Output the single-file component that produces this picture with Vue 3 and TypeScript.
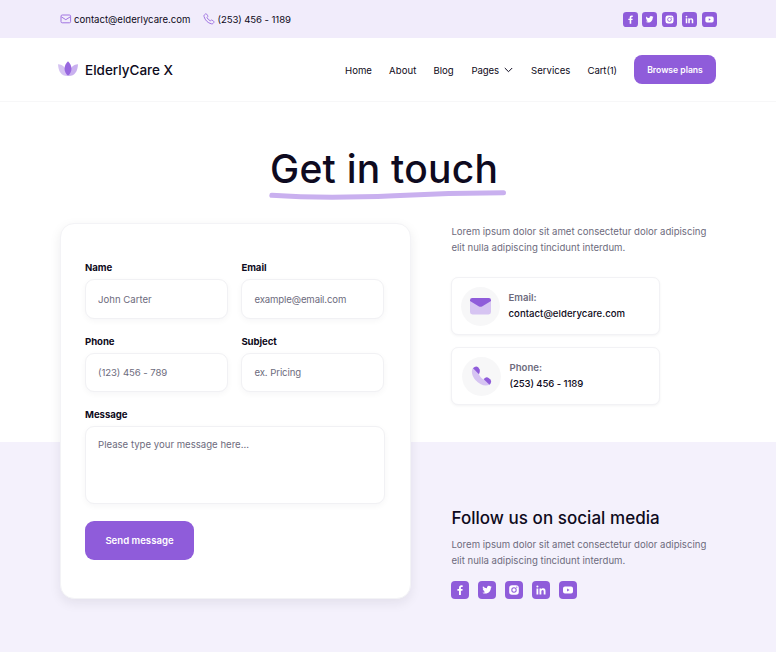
<script setup lang="ts">
interface Field {
  id: string
  label: string
  placeholder: string
}

const fields: Field[] = [
  { id: 'name', label: 'Name', placeholder: 'John Carter' },
  { id: 'email', label: 'Email', placeholder: 'example@email.com' },
  { id: 'phone', label: 'Phone', placeholder: '(123) 456 - 789' },
  { id: 'subject', label: 'Subject', placeholder: 'ex. Pricing' },
]

// Glyphs are drawn on an 18x18 tile.
const socials: { name: string; path: string }[] = [
  {
    name: 'facebook',
    path: 'M9.9 14V9.7h1.5l.25-1.75H9.9V6.9c0-.5.25-.95 1-.95h.8V4.45S11 4.3 10.3 4.3C8.9 4.3 8 5.2 8 6.7v1.25H6.4V9.7H8V14z',
  },
  {
    name: 'twitter',
    path: 'M13.8 5.8c-.35.15-.7.25-1.1.3.4-.24.7-.6.85-1.05-.4.22-.8.38-1.2.46A1.95 1.95 0 0 0 9 7.3C7.4 7.2 5.95 6.45 5 5.25c-.5.9-.25 2 .6 2.6-.3 0-.6-.1-.87-.24 0 .95.65 1.75 1.55 1.94-.28.07-.57.08-.87.03.25.77.97 1.33 1.8 1.34A3.9 3.9 0 0 1 4.3 11.7c.88.56 1.9.88 3 .88 3.65 0 5.7-3.05 5.57-5.8.37-.27.7-.6.93-.98z',
  },
  {
    name: 'instagram',
    path: 'M7 4.2h4A2.8 2.8 0 0 1 13.8 7v4A2.8 2.8 0 0 1 11 13.8H7A2.8 2.8 0 0 1 4.2 11V7A2.8 2.8 0 0 1 7 4.2zm2 2.1a2.7 2.7 0 1 0 0 5.4 2.7 2.7 0 0 0 0-5.4zm0 1a1.7 1.7 0 1 1 0 3.4 1.7 1.7 0 0 1 0-3.4zM11.8 5.6a.6.6 0 1 0 0 1.2.6.6 0 0 0 0-1.2z',
  },
  {
    name: 'linkedin',
    path: 'M4.5 7.5h1.8v6H4.5zM5.4 4.4a1.05 1.05 0 1 1 0 2.1 1.05 1.05 0 0 1 0-2.1zM7.5 7.5h1.7v.85c.3-.55 1-1 1.95-1 1.9 0 2.35 1.2 2.35 2.85v3.3h-1.8v-2.9c0-.8-.05-1.65-1.05-1.65s-1.3.75-1.3 1.6v2.95H7.5z',
  },
  {
    name: 'youtube',
    path: 'M6 5.5h6a2 2 0 0 1 2 2v3a2 2 0 0 1-2 2H6a2 2 0 0 1-2-2v-3a2 2 0 0 1 2-2zM8.1 7.6v2.8L10.6 9z',
  },
]
</script>

<template>
  <div class="page">
    <div class="topbar">
      <a class="top-item">
        <svg class="top-mail" viewBox="0 0 12 10">
          <rect x="1" y="1" width="9.6" height="7.8" rx="1.2" />
          <path d="M1.3 2.8 5.8 5.7l4.5-2.9" />
        </svg>
        <span class="top-email">contact@elderlycare.com</span>
      </a>
      <a class="top-item">
        <svg class="top-phone" viewBox="0 0 12 12">
          <path d="M1.4 1.9 2.5.9q.6-.4 1.1.2l1.1 1.6q.3.6-.1 1.1l-.6.7q.9 2.2 3.3 3.3l.8-.6q.5-.4 1 0l1.6 1.1q.6.4.2 1.1l-.8 1q-.7.7-1.8.4Q2.8 9.3 1 3.5.7 2.6 1.4 1.9z" />
        </svg>
        <span class="top-number">(253) 456 - 1189</span>
      </a>
      <div class="socials socials-top">
        <svg v-for="s in socials" :key="s.name" class="social" viewBox="0 0 18 18">
          <rect width="18" height="18" rx="4" />
          <path :d="s.path" fill-rule="evenodd" />
        </svg>
      </div>
    </div>

    <header class="header">
      <svg class="logo-mark" viewBox="0 0 20 16">
        <path d="M0 3.2C5 3.3 9 7 9.5 15 3.5 15.2.3 10.5 0 3.2z" fill="#d5c3f2" />
        <path d="M20 3.2C15 3.3 11 7 10.5 15 16.5 15.2 19.7 10.5 20 3.2z" fill="#c9b0ef" />
        <path d="M10 .3C14.6 4.5 14.6 11 10 15 5.4 11 5.4 4.5 10 .3z" fill="#9867df" />
      </svg>
      <span class="logo-text">ElderlyCare X</span>
      <nav class="nav">
        <a class="n-home">Home</a>
        <a class="n-about">About</a>
        <a class="n-blog">Blog</a>
        <a class="n-pages">Pages
          <svg class="chevron" viewBox="0 0 9 6"><path d="M.8 1 4.5 4.7 8.2 1" /></svg>
        </a>
        <a class="n-services">Services</a>
        <a class="n-cart">Cart(1)</a>
      </nav>
      <button class="btn btn-plans">Browse plans</button>
    </header>

    <main class="main">
      <div class="title-block">
        <h1 class="title">Get in touch</h1>
        <svg class="underline" viewBox="0 0 238 12">
          <path d="M2.8 5.3Q55 8.8 125 5.7 180 2.8 234.5 2.8" />
        </svg>
      </div>

      <div class="columns">
        <form class="card" @submit.prevent>
          <div class="fields">
            <div v-for="f in fields" :key="f.id" class="field">
              <label class="label" :for="f.id">{{ f.label }}</label>
              <input :id="f.id" class="input" :class="'in-' + f.id" :placeholder="f.placeholder" />
            </div>
          </div>
          <div class="field">
            <label class="label" for="message">Message</label>
            <textarea id="message" class="input message" placeholder="Please type your message here..."></textarea>
          </div>
          <button class="btn btn-send" type="submit">Send message</button>
        </form>

        <div class="side">
          <p class="lorem">
            Lorem ipsum dolor sit amet consectetur dolor adipiscing<br />
            elit nulla adipiscing tincidunt interdum.
          </p>

          <div class="contact">
            <svg class="disc" viewBox="0 0 39 39">
              <circle cx="19.5" cy="19.5" r="19.4" fill="#f7f7f8" />
              <rect x="9" y="11" width="21" height="16.5" rx="2.4" fill="#d6c4f2" />
              <path d="M9 14v-.7A2.4 2.4 0 0 1 11.4 11h16.2A2.4 2.4 0 0 1 30 13.3v.7l-9 5.4q-1.5.8-3 0z" fill="#8f5cda" />
            </svg>
            <div class="contact-text">
              <div class="contact-label">Email:</div>
              <div class="contact-value">contact@elderycare.com</div>
            </div>
          </div>

          <div class="contact contact-phone">
            <svg class="disc" viewBox="0 0 39 39">
              <circle cx="19.5" cy="19.5" r="19.4" fill="#f7f7f8" />
              <path d="M11.2 10.8C8.7 13.8 10 19 13.4 23 17.5 27.5 22.8 30 27.6 27.8L23.8 21.6 21.7 22.7C19.8 21.6 17.9 19.6 17 17.3L17.7 15.5 14 10.5z" fill="#d6c4f2" />
              <path d="M11 11.2Q13.6 8.4 16.2 10.2L17.5 12.2Q18.7 14.5 17.2 16.5L16.7 17.1z" fill="#8f5cda" />
              <path d="M21.7 22.2 22.7 21.2Q24.6 19.7 26.6 20.9L28.4 22.4Q30.3 24.8 27.5 27.7z" fill="#8f5cda" />
            </svg>
            <div class="contact-text">
              <div class="contact-label">Phone:</div>
              <div class="contact-value v-phone">(253) 456 - 1189</div>
            </div>
          </div>

          <section class="follow">
            <h2 class="follow-title">Follow us on social media</h2>
            <p class="lorem">
              Lorem ipsum dolor sit amet consectetur dolor adipiscing<br />
              elit nulla adipiscing tincidunt interdum.
            </p>
            <div class="socials socials-bottom">
              <svg v-for="s in socials" :key="s.name" class="social" viewBox="0 0 18 18">
                <rect width="18" height="18" rx="4" />
                <path :d="s.path" fill-rule="evenodd" />
              </svg>
            </div>
          </section>
        </div>
      </div>
    </main>
  </div>
</template>

<style>
body {
  margin: 0;
  background: #fff;
}
</style>

<style scoped>
.page,
.page * {
  box-sizing: border-box;
}
.page {
  width: 776px;
  height: 652px;
  overflow: hidden;
  font-family: Inter, 'Liberation Sans', sans-serif;
  font-size: 9.6px;
  color: #0e0a20;
  white-space: nowrap;
}
h1, h2, p {
  margin: 0;
  font-weight: 500;
}
svg {
  display: block;
  flex: none;
}
.topbar {
  height: 38px;
  padding: 0 59.5px;
  display: flex;
  align-items: center;
  background: #f1ecfb;
}
.top-item {
  display: flex;
  align-items: center;
}
.top-item svg {
  fill: none;
  stroke: #a175e2;
  stroke-width: 1;
}
.top-mail {
  width: 12px;
  height: 10px;
  margin-right: 2.5px;
}
.top-phone {
  width: 12px;
  height: 12px;
  margin-right: 2.5px;
}
.top-email {
  width: 129px;
}
.top-number {
  letter-spacing: -0.09px;
}
.socials {
  display: flex;
}
.socials-top {
  margin-left: auto;
  gap: 4.7px;
}
.socials-top .social {
  width: 15px;
  height: 15px;
}
.social rect {
  fill: #8f5cda;
}
.social path {
  fill: #fff;
}
.header {
  height: 64px;
  padding: 0 60px 0 58px;
  display: flex;
  align-items: center;
  border-bottom: 1px solid #f7f7f8;
}
.logo-mark {
  width: 20px;
  height: 16px;
  margin-right: 7px;
  margin-bottom: 2px;
}
.logo-text {
  font-size: 13.5px;
  font-weight: 500;
}
.nav {
  flex: 1;
  padding-top: 1px;
  display: grid;
  grid-template-columns: 44px 44.5px 38px 59.5px 56.5px 46.5px;
  justify-content: end;
}
.nav a {
  display: flex;
  align-items: center;
}
.n-pages {
  letter-spacing: -0.1px;
}
.n-about {
  letter-spacing: 0.1px;
}
.n-cart {
  letter-spacing: -0.1px;
}
.chevron {
  width: 9px;
  height: 6px;
  margin-left: 4.5px;
  fill: none;
  stroke: #0e0a20;
  stroke-width: 1;
}
.btn {
  padding: 0;
  border: 0;
  background: #8f5cda;
  color: #fff;
  font-family: inherit;
  font-weight: 600;
}
.btn-plans {
  width: 82px;
  height: 29px;
  border-radius: 8px;
  font-size: 8.6px;
}
.main {
  height: 550px;
  background: linear-gradient(#fff 340px, #f4f1fc 340px);
}
.title-block {
  height: 121px;
  padding: 43px 0 0 269px;
}
.title {
  height: 45px;
  padding-left: 1px;
  font-size: 39px;
  line-height: 47px;
  letter-spacing: 0.24px;
}
.underline {
  width: 238px;
  height: 12px;
  fill: none;
  stroke: #c9b0ef;
  stroke-width: 5;
  stroke-linecap: round;
}
.columns {
  display: flex;
  gap: 40.45px;
  padding-left: 60px;
}
.card {
  width: 351px;
  height: 376px;
  padding: 36px 24px 0;
  border: 1px solid #f3f3f6;
  border-radius: 14px;
  background: #fff;
  box-shadow: 0 4px 12px rgba(20, 20, 43, 0.08);
}
.fields {
  display: grid;
  grid-template-columns: 142.5px 142.5px;
  column-gap: 13.9px;
}
.fields .field {
  height: 73.5px;
}
.label {
  display: block;
  height: 19px;
  line-height: 15px;
  font-weight: 700;
  letter-spacing: -0.05px;
}
.input {
  display: block;
  width: 100%;
  height: 39.5px;
  padding: 0 12px;
  border: 1px solid #f1f1f4;
  border-radius: 9px;
  outline: 0;
  resize: none;
  background: #fff;
  box-shadow: 0 2px 6px rgba(20, 20, 43, 0.04);
  font-family: inherit;
  font-size: 9.6px;
}
.in-name,
.in-email {
  padding-top: 1px;
}
.in-email {
  letter-spacing: -0.12px;
}
.in-phone,
.in-subject {
  letter-spacing: -0.08px;
}
.input::placeholder {
  color: #6d6b7d;
  opacity: 1;
}
.message {
  width: 300px;
  height: 78px;
  padding-top: 11.5px;
}
.btn-send {
  display: block;
  width: 109px;
  height: 39px;
  margin-top: 17px;
  border-radius: 9px;
  font-size: 9.6px;
}
.lorem {
  padding-top: 1px;
  font-weight: 400;
  line-height: 16.3px;
  color: #6d6b7d;
}
.contact {
  width: 209px;
  height: 58px;
  margin-top: 20px;
  padding-left: 8.6px;
  display: flex;
  align-items: center;
  gap: 8.5px;
  border: 1px solid #f2f2f5;
  border-radius: 7px;
  background: #fff;
  box-shadow: 0 1px 3px rgba(20, 20, 43, 0.05);
}
.contact-phone {
  margin-top: 12px;
  padding-left: 9.6px;
}
.disc {
  width: 39px;
  height: 39px;
  margin-top: 1px;
}
.contact-text {
  line-height: 15.3px;
  font-weight: 500;
}
.contact-label {
  color: #6d6b7d;
  font-weight: 600;
}
.contact-value {
  letter-spacing: 0.03px;
}
.v-phone {
  letter-spacing: -0.11px;
}
.follow {
  margin-top: 102px;
}
.follow-title {
  height: 29px;
  font-size: 17px;
  line-height: 23px;
  letter-spacing: 0.04px;
}
.socials-bottom {
  gap: 9px;
  margin-top: 12px;
}
.socials-bottom .social {
  width: 18px;
  height: 18px;
}
</style>
